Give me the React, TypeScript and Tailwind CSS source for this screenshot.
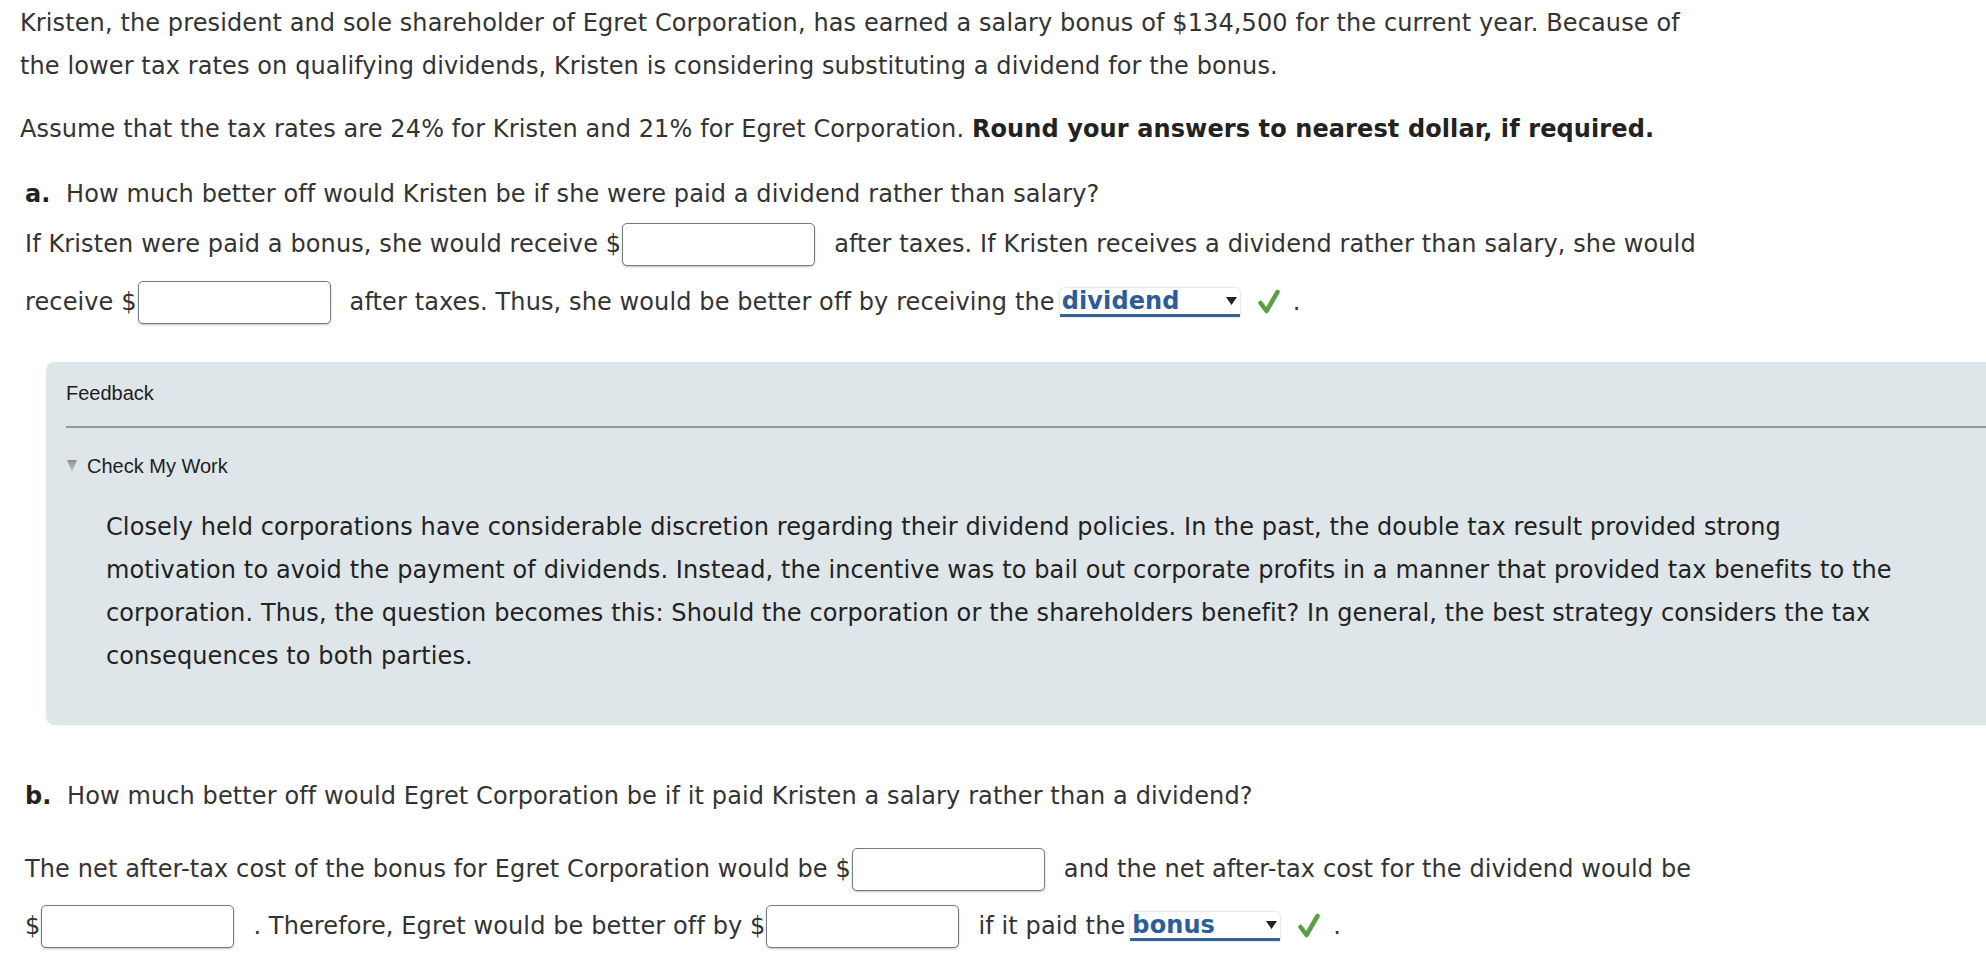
// Homework item: Kristen / Egret Corporation dividend vs. salary question
// Two answer sections with inline inputs, a graded dropdown and a feedback panel.

const verdana = "font-['DejaVu_Sans','Liberation_Sans',sans-serif] tracking-[0.11px]";
const helvetica = "font-['Liberation_Sans',Arial,sans-serif] tracking-normal";

function AnswerInput(): React.JSX.Element {
  return (
    <input
      type="text"
      className="ml-[1px] mr-[19px] h-[43px] w-[193px] rounded-[5px] border border-[#7a7a7a] bg-white shadow-[0_1px_2px_rgba(0,0,0,0.25)] outline-none"
    />
  );
}

function CheckMark(): React.JSX.Element {
  return (
    <svg className="h-[26px] w-[24px]" viewBox="0 0 24 26" fill="none">
      <path
        d="M3.5 14 L9.5 22 L20.5 3"
        stroke="#58a043"
        strokeWidth={4.5}
        strokeLinecap="round"
        strokeLinejoin="round"
      />
    </svg>
  );
}

function GradedSelect({ value, width }: { value: string; width: string }): React.JSX.Element {
  return (
    <span className="inline-flex items-center">
      <span
        className={`${width} ml-[5px] inline-flex h-[29px] items-center justify-between rounded-t-[5px] border-b-[3px] border-[#336397] bg-white pl-[2px] pr-[3px] shadow-[0_0_2px_rgba(0,0,0,0.3)]`}
      >
        <span className="font-bold leading-none text-[#2c5d98]">{value}</span>
        <svg className="h-[8px] w-[11px]" viewBox="0 0 11 8">
          <polygon points="0,0 11,0 5.5,8" fill="#222" />
        </svg>
      </span>
      <span className="ml-[17px]">
        <CheckMark />
      </span>
      <span className="ml-[12px]">.</span>
    </span>
  );
}

function App(): React.JSX.Element {
  return (
    <div className={`${verdana} min-h-screen bg-white pl-[20px] text-[24px] text-[#333]`}>
      {/* ---- Intro ---- */}
      <p className="pt-[2px] leading-[43px]">
        Kristen, the president and sole shareholder of Egret Corporation, has earned a salary bonus of $134,500 for the
        current year. Because of
        <br />
        the lower tax rates on qualifying dividends, Kristen is considering substituting a dividend for the bonus.
      </p>
      <p className="mt-[20px] leading-[43px]">
        Assume that the tax rates are 24% for Kristen and 21% for Egret Corporation.{' '}
        <strong className="text-[#222]">Round your answers to nearest dollar, if required.</strong>
      </p>

      {/* ---- Part a ---- */}
      <div className="pl-[5px]">
        <p className="mt-[22px] leading-[43px]">
          <strong className="text-[#222]">a.</strong>&nbsp; How much better off would Kristen be if she were paid a
          dividend rather than salary?
        </p>
        <div className="mt-[3px] flex h-[50px] items-center whitespace-nowrap">
          <span>If Kristen were paid a bonus, she would receive $</span>
          <AnswerInput />
          <span>after taxes. If Kristen receives a dividend rather than salary, she would</span>
        </div>
        <div className="mt-[8px] flex h-[50px] items-center whitespace-nowrap">
          <span>receive $</span>
          <AnswerInput />
          <span>after taxes. Thus, she would be better off by receiving the</span>
          <GradedSelect value="dividend" width="w-[180px]" />
        </div>
      </div>

      {/* ---- Feedback panel ---- */}
      <section className="ml-[26px] mt-[35px] rounded-l-[8px] bg-[#dfe6e9] pb-[47px] pt-[19px]">
        <div className={`${helvetica} pl-[20px] text-[20px] text-[#1e1e1e]`}>
          <h3 className="leading-[24px]">Feedback</h3>
          <hr className="mt-[21px] border-t-2 border-[#93979b]" />
          <div className="mt-[26px] flex items-center gap-[10px] leading-[24px]">
            <svg className="ml-[1px] h-[12px] w-[10px]" viewBox="0 0 10 12">
              <defs>
                <linearGradient id="tri" x1="0" y1="0" x2="0" y2="1">
                  <stop offset="0" stopColor="#8c8c8c" />
                  <stop offset="1" stopColor="#c8c8c8" />
                </linearGradient>
              </defs>
              <polygon points="0,0 10,0 5,12" fill="url(#tri)" />
            </svg>
            <span>Check My Work</span>
          </div>
        </div>
        <p className={`${verdana} mt-[28px] pl-[60px] text-[24px] leading-[43px] text-[#222]`}>
          Closely held corporations have considerable discretion regarding their dividend policies. In the past, the
          double tax result provided strong
          <br />
          motivation to avoid the payment of dividends. Instead, the incentive was to bail out corporate profits in a
          manner that provided tax benefits to the
          <br />
          corporation. Thus, the question becomes this: Should the corporation or the shareholders benefit? In general,
          the best strategy considers the tax
          <br />
          consequences to both parties.
        </p>
      </section>

      {/* ---- Part b ---- */}
      <div className="pl-[5px]">
        <p className="mt-[50px] leading-[43px]">
          <strong className="text-[#222]">b.</strong>&nbsp; How much better off would Egret Corporation be if it paid
          Kristen a salary rather than a dividend?
        </p>
        <div className="mt-[26px] flex h-[50px] items-center whitespace-nowrap">
          <span>The net after-tax cost of the bonus for Egret Corporation would be $</span>
          <AnswerInput />
          <span>and the net after-tax cost for the dividend would be</span>
        </div>
        <div className="mt-[7px] flex h-[50px] items-center whitespace-nowrap">
          <span>$</span>
          <AnswerInput />
          <span>. Therefore, Egret would be better off by $</span>
          <AnswerInput />
          <span>if it paid the</span>
          <GradedSelect value="bonus" width="w-[150px]" />
        </div>
      </div>
    </div>
  );
}

export default App;
